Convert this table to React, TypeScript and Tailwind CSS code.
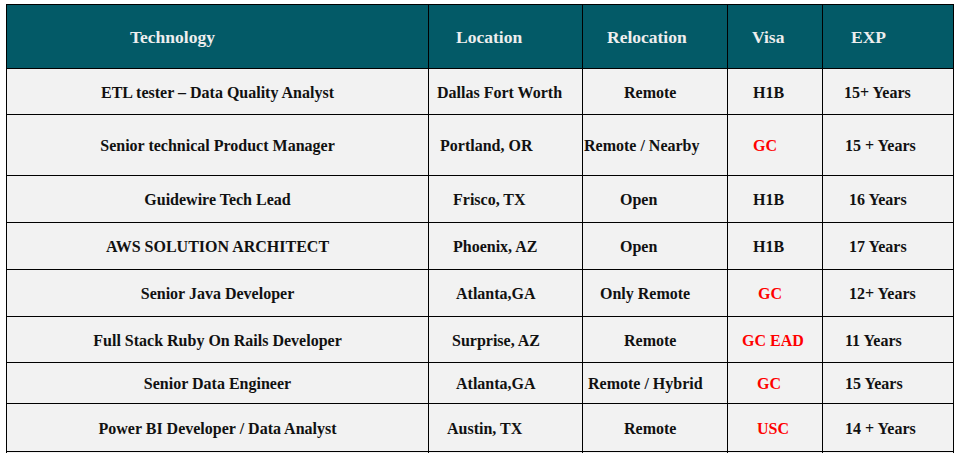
const header = [
  { label: "Technology", pl: "pl-[123px]" },
  { label: "Location", pl: "pl-[27px]" },
  { label: "Relocation", pl: "pl-[24px]" },
  { label: "Visa", pl: "pl-[24px]" },
  { label: "EXP", pl: "pl-[28px]" },
];

type Cell = { text: string; pl: string; red?: boolean };

const rows: { h: string; tech: string; cells: Cell[] }[] = [
  {
    h: "h-[46px]",
    tech: "ETL tester – Data Quality Analyst",
    cells: [
      { text: "Dallas Fort Worth", pl: "pl-[8px]" },
      { text: "Remote", pl: "pl-[41px]" },
      { text: "H1B", pl: "pl-[25px]" },
      { text: "15+ Years", pl: "pl-[21px]" },
    ],
  },
  {
    h: "h-[61px]",
    tech: "Senior technical Product Manager",
    cells: [
      { text: "Portland, OR", pl: "pl-[11px]" },
      { text: "Remote / Nearby", pl: "pl-[1px]" },
      { text: "GC", pl: "pl-[25px]", red: true },
      { text: "15 + Years", pl: "pl-[22px]" },
    ],
  },
  {
    h: "h-[47px]",
    tech: "Guidewire Tech Lead",
    cells: [
      { text: "Frisco, TX", pl: "pl-[24px]" },
      { text: "Open", pl: "pl-[37px]" },
      { text: "H1B", pl: "pl-[25px]" },
      { text: "16 Years", pl: "pl-[26px]" },
    ],
  },
  {
    h: "h-[47px]",
    tech: "AWS SOLUTION ARCHITECT",
    cells: [
      { text: "Phoenix, AZ", pl: "pl-[24px]" },
      { text: "Open", pl: "pl-[37px]" },
      { text: "H1B", pl: "pl-[25px]" },
      { text: "17 Years", pl: "pl-[26px]" },
    ],
  },
  {
    h: "h-[47px]",
    tech: "Senior Java Developer",
    cells: [
      { text: "Atlanta,GA", pl: "pl-[27px]" },
      { text: "Only Remote", pl: "pl-[17px]" },
      { text: "GC", pl: "pl-[30px]", red: true },
      { text: "12+ Years", pl: "pl-[26px]" },
    ],
  },
  {
    h: "h-[46px]",
    tech: "Full Stack Ruby On Rails Developer",
    cells: [
      { text: "Surprise, AZ", pl: "pl-[23px]" },
      { text: "Remote", pl: "pl-[41px]" },
      { text: "GC EAD", pl: "pl-[14px]", red: true },
      { text: "11 Years", pl: "pl-[22px]" },
    ],
  },
  {
    h: "h-[41px]",
    tech: "Senior Data Engineer",
    cells: [
      { text: "Atlanta,GA", pl: "pl-[27px]" },
      { text: "Remote / Hybrid", pl: "pl-[5px]" },
      { text: "GC", pl: "pl-[29px]", red: true },
      { text: "15 Years", pl: "pl-[22px]" },
    ],
  },
  {
    h: "h-[48px]",
    tech: "Power BI Developer / Data Analyst",
    cells: [
      { text: "Austin, TX", pl: "pl-[18px]" },
      { text: "Remote", pl: "pl-[41px]" },
      { text: "USC", pl: "pl-[29px]", red: true },
      { text: "14 + Years", pl: "pl-[22px]" },
    ],
  },
];

export default function App() {
  return (
    <div
      className="min-h-screen bg-white pt-[4px] pl-[6px]"
      style={{ fontFamily: '"Liberation Serif", "Times New Roman", serif' }}
    >
      <div className="grid w-[948px] grid-cols-[422px_154px_145px_95px_131px] border-l border-t border-black font-bold">
        {/* Header */}
        {header.map((c) => (
          <div
            key={c.label}
            className={`flex h-[64px] items-center border-b border-r border-black bg-[#035a67] pt-[2px] text-[17.5px] text-[#eeeeee] ${c.pl}`}
          >
            {c.label}
          </div>
        ))}

        {/* Rows */}
        {rows.map((row) => (
          <div key={row.tech} className="contents">
            <div
              className={`flex items-center justify-center border-b border-r border-black bg-[#f2f2f2] pt-[2px] text-[16px] text-[#111111] ${row.h}`}
            >
              {row.tech}
            </div>
            {row.cells.map((c, i) => (
              <div
                key={i}
                className={`flex items-center whitespace-nowrap border-b border-r border-black bg-[#f2f2f2] pt-[2px] text-[16px] ${
                  c.red ? "text-[#ff0000]" : "text-[#111111]"
                } ${row.h} ${c.pl}`}
              >
                {c.text}
              </div>
            ))}
          </div>
        ))}

        {/* next row, below the fold */}
        {[0, 1, 2, 3, 4].map((i) => (
          <div key={i} className="h-[46px] border-b border-r border-black bg-[#f2f2f2]" />
        ))}
      </div>
    </div>
  );
}
